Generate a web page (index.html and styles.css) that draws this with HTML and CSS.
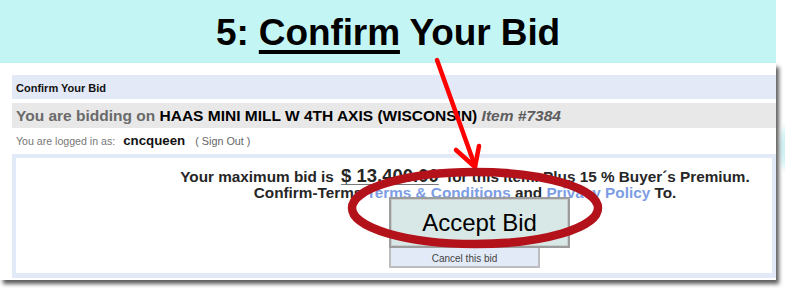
FILE: index.html
```html
<!DOCTYPE html>
<html lang="en">
<head>
<meta charset="utf-8">
<title>Confirm Your Bid</title>
<link rel="stylesheet" href="styles.css">
</head>
<body>
<header class="banner">
  <h1 class="banner-title">5: <span class="u">Confirm</span> Your Bid</h1>
</header>
<main class="panel">
  <div class="titlebar">Confirm Your Bid</div>
  <div class="itembar"><span class="lead">You are bidding on</span> <span class="item-name">HAAS MINI MILL W 4TH AXIS (WISCONSIN)</span> <span class="item-no">Item #7384</span></div>
  <div class="login"><span class="login-label">You are logged in as:</span><span class="user">cncqueen</span><span class="signout">( Sign Out )</span></div>
  <section class="confirm-box">
    <p class="msg">Your maximum bid is <span class="amount">$ 13,400.00</span> for this item. Plus 15 % Buyer´s Premium.<br>Confirm-Terms <a class="link" href="#">Terms &amp; Conditions</a> and <a class="link" href="#">Privacy Policy</a> To.</p>
    <div class="actions">
      <button class="accept" type="button">Accept Bid</button>
      <button class="cancel" type="button">Cancel this bid</button>
    </div>
  </section>
</main>
<svg class="annotation" width="785" height="288" viewBox="0 0 785 288" aria-hidden="true">
  <line x1="437" y1="60" x2="475" y2="166" stroke="#ff0000" stroke-width="4.5" stroke-linecap="round"/>
  <polyline points="456,150 475,167 479,146" fill="none" stroke="#ff0000" stroke-width="4.5" stroke-linecap="round" stroke-linejoin="round"/>
  <ellipse cx="475" cy="208" rx="123" ry="36" fill="none" stroke="#b3121b" stroke-width="8.5"/>
</svg>
</body>
</html>
```
FILE: styles.css
```css
html, body {
  margin: 0;
  padding: 0;
}
body {
  width: 785px;
  height: 288px;
  overflow: hidden;
  position: relative;
  font-family: "Liberation Sans", Arial, sans-serif;
  background:
    radial-gradient(ellipse 8px 26px at 786px 148px, #c6f1f4 0%, #d9f6f8 60%, rgba(255,255,255,0) 100%) no-repeat,
    #ffffff;
}
.banner {
  width: 776px;
  height: 63px;
  background: #c4f5f5;
  display: flex;
  justify-content: center;
  box-sizing: border-box;
  padding-top: 14px;
}
.banner-title {
  margin: 0;
  font-size: 37px;
  line-height: 37px;
  font-weight: bold;
  color: #000;
  letter-spacing: -0.1px;
}
.banner-title .u {
  text-decoration: underline;
  text-decoration-thickness: 3.5px;
  text-underline-offset: 5px;
}
.panel {
  width: 776px;
  height: 217px;
  box-sizing: border-box;
  background: #fff;
  padding: 12px 0 0 12px;
  box-shadow: 3px 4px 4px rgba(40,40,40,0.75), -1px 0 1px rgba(0,0,0,0.08);
  display: flex;
  flex-direction: column;
}
.titlebar {
  height: 24px;
  box-sizing: border-box;
  padding: 1px 0 0 4px;
  line-height: 24px;
  background: #e3e9f7;
  font-size: 11px;
  font-weight: bold;
  color: #111;
}
.itembar {
  margin-top: 4px;
  height: 25px;
  box-sizing: border-box;
  padding: 1px 0 0 4px;
  line-height: 24px;
  background: #e8e8e8;
  font-size: 15.5px;
  font-weight: bold;
  white-space: nowrap;
}
.itembar .lead { color: #6a6a6a; }
.itembar .item-name { color: #000; }
.itembar .item-no { color: #5e5e5e; font-style: italic; }
.login {
  height: 26px;
  line-height: 26px;
  padding-left: 4px;
  display: flex;
  align-items: baseline;
  white-space: nowrap;
}
.login-label {
  font-size: 10.6px;
  color: #777;
}
.user {
  margin-left: 8px;
  font-size: 13.3px;
  font-weight: bold;
  color: #111;
}
.signout {
  margin-left: 10px;
  font-size: 10.8px;
  color: #666;
}
.confirm-box {
  height: 124px;
  box-sizing: border-box;
  border: 4px solid #e3eaf7;
  border-bottom-width: 5px;
  background: #fff;
  display: flex;
  flex-direction: column;
}
.msg {
  margin: 0;
  padding: 10px 0 0 142px;
  text-align: center;
  font-size: 15.3px;
  line-height: 16px;
  font-weight: bold;
  color: #262626;
  white-space: nowrap;
}
.amount {
  font-size: 18.5px;
  line-height: 16px;
  margin: 0 4px 0 3px;
  text-decoration: underline;
  text-decoration-thickness: 1px;
  text-decoration-color: #777;
  text-underline-offset: 2px;
}
.link {
  color: #7c9de4;
  text-decoration: none;
}
.actions {
  margin-top: -4px;
  padding-left: 373px;
  display: flex;
  flex-direction: column;
  align-items: flex-start;
}
.accept {
  width: 181px;
  height: 51px;
  box-sizing: border-box;
  margin: 0;
  border: 2px solid #9c9c9c;
  box-shadow: inset 0 0 0 1px #c9cfcf;
  background: #d8e8e6;
  font-family: "Liberation Sans", Arial, sans-serif;
  font-size: 24px;
  color: #000;
  padding: 0;
}
.cancel {
  width: 151px;
  height: 20px;
  box-sizing: border-box;
  margin: 0;
  border: 2px solid #bdbdbd;
  border-top-width: 0;
  background: #e3eaf7;
  font-family: "Liberation Sans", Arial, sans-serif;
  font-size: 10px;
  color: #444;
  padding: 2px 0 0 0;
}
.annotation {
  position: absolute;
  left: 0;
  top: 0;
  pointer-events: none;
}
```
